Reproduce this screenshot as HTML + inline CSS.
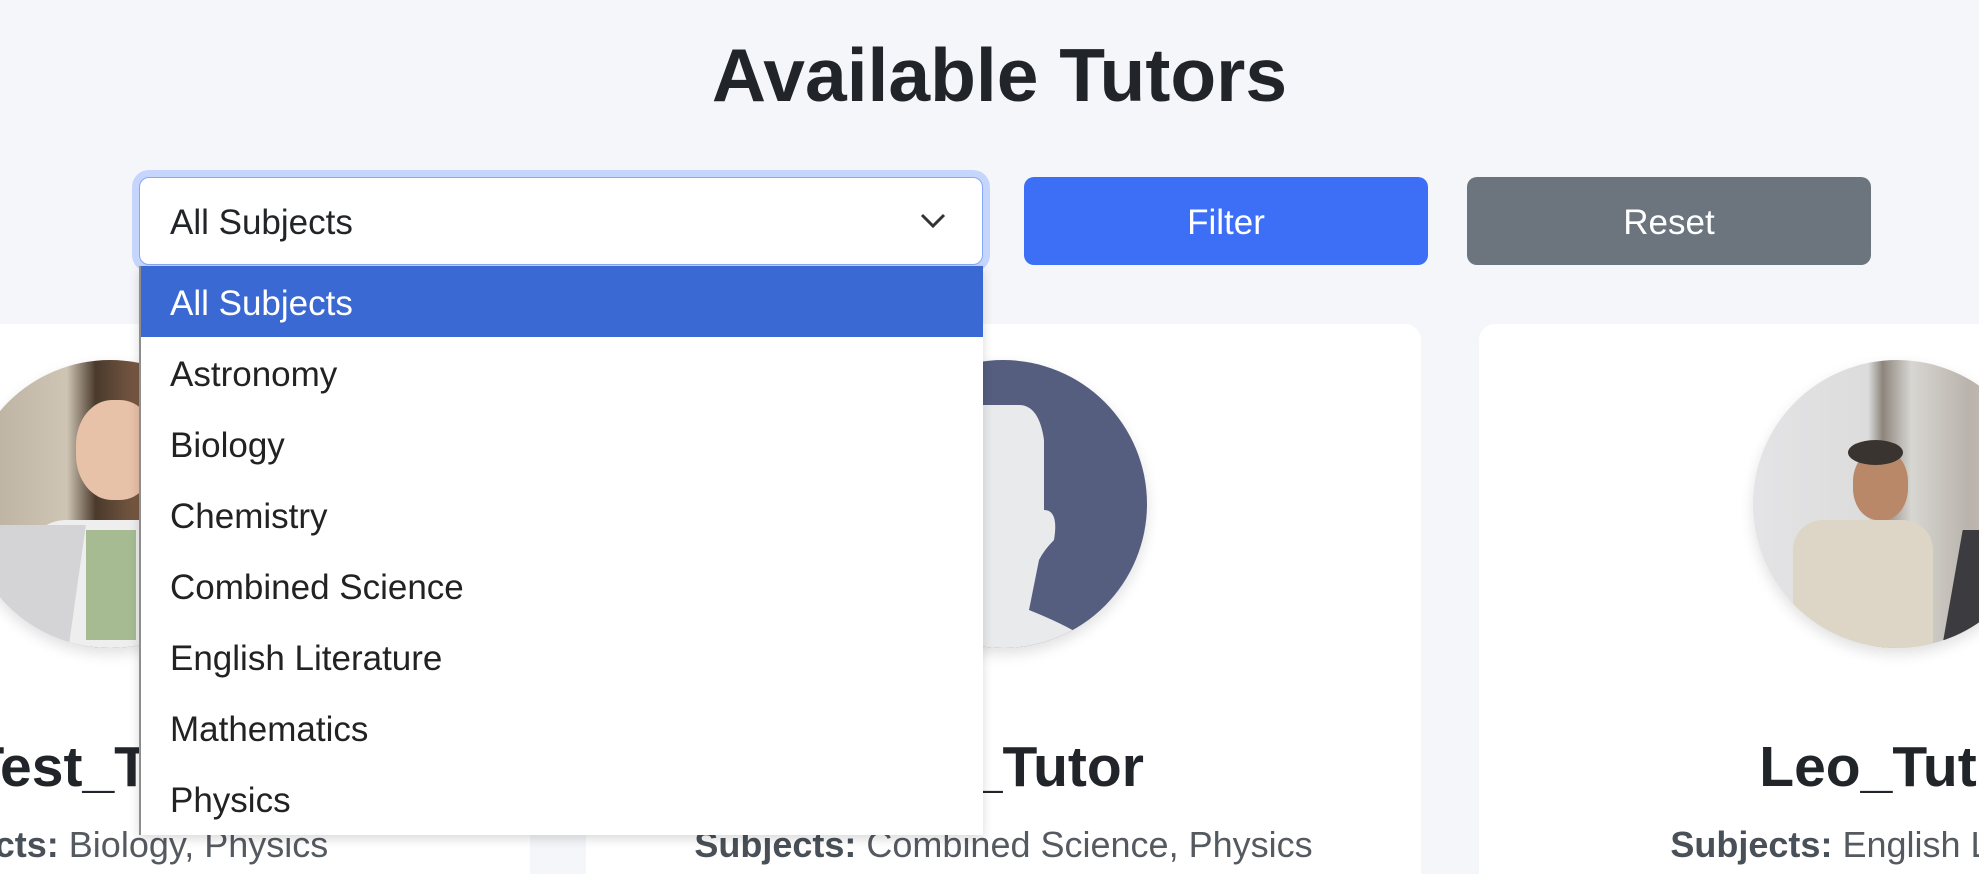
<!DOCTYPE html>
<html><head><meta charset="utf-8"><style>
*{margin:0;padding:0;box-sizing:border-box}
html,body{width:1979px;height:874px;overflow:hidden}
body{background:#f5f6fa;font-family:"Liberation Sans",sans-serif;color:#212529;position:relative}
.abs{position:absolute}
h1{position:absolute;left:0;width:1999px;top:32px;text-align:center;font-size:75px;font-weight:bold}
.sel{left:139px;top:177px;width:844px;height:88px;background:#fff;border:1px solid #86a8f8;border-radius:10px;box-shadow:0 0 0 7px #c5d5fb;font-size:35px;line-height:90px;padding-left:30px}
.btn{top:177px;width:404px;height:88px;border-radius:10px;color:#fff;font-size:35px;line-height:92px;text-align:center}
.card{top:324px;width:835px;height:550px;background:#fff;border-radius:16px 16px 0 0}
.av{width:288px;height:288px;border-radius:50%;overflow:hidden;top:36px;box-shadow:0 6px 14px rgba(0,0,0,.12)}
.name{top:410px;width:835px;text-align:center;font-size:57px;font-weight:bold;left:0}
.sub{top:500px;width:835px;text-align:center;font-size:36px;color:#555a60;left:0}
.sub b{color:#495057}
.dd{left:139px;top:266px;width:844px;height:569px;background:#fff;border-left:2px solid #8e8e8e;box-shadow:0 4px 10px rgba(0,0,0,.15)}
.it{height:71px;line-height:76px;padding-left:29px;font-size:35px;color:#222}
.it.on{background:#3b69d4;color:#fff}
</style></head><body>
<h1>Available Tutors</h1>
<div class="abs sel">All Subjects
<svg class="abs" style="right:36px;top:34px" width="26" height="18" viewBox="0 0 26 18"><path d="M2 3 L13 14 L24 3" fill="none" stroke="#333" stroke-width="3"/></svg></div>
<div class="abs btn" style="left:1024px;background:#3d6ef6">Filter</div>
<div class="abs btn" style="left:1467px;background:#6c757d">Reset</div>

<div class="abs card" style="left:-305px">
 <div class="abs av" style="left:271px;background:linear-gradient(90deg,#b8ad9c 0,#cfc5b5 35%,#4a3a2c 45%,#7a5a44 60%,#5a4536 80%,#3e3b39 100%)">
  <div class="abs" style="left:110px;top:40px;width:80px;height:100px;border-radius:45%;background:#e8c2a8"></div>
  <div class="abs" style="left:60px;top:160px;width:180px;height:140px;background:#eeeeee;border-radius:40px 40px 0 0"></div>
  <div class="abs" style="left:120px;top:170px;width:50px;height:110px;background:#a7bb92"></div>
  <div class="abs" style="left:0;top:165px;width:110px;height:140px;background:#d4d4d6;transform:skewX(-8deg)"></div>
 </div>
 <div class="abs name">Test_Tutor</div>
 <div class="abs sub"><b>Subjects:</b> Biology, Physics</div>
</div>

<div class="abs card" style="left:586px">
 <div class="abs av" style="left:273px;background:#565e80">
  <svg width="288" height="288" viewBox="0 0 288 288"><path d="M60 60 Q60 45 80 45 L160 45 Q180 45 185 80 L185 150 Q200 150 195 180 Q185 190 180 200 L170 250 Q220 270 240 288 L0 288 L0 60 Z" fill="#e8eaec"/></svg>
 </div>
 <div class="abs name">Ben_Tutor</div>
 <div class="abs sub"><b>Subjects:</b> Combined Science, Physics</div>
</div>

<div class="abs card" style="left:1479px">
 <div class="abs av" style="left:274px;background:linear-gradient(90deg,#e4e4e6 0,#dcdcdc 40%,#8d857c 45%,#d8d6d2 55%,#b9b3ab 75%,#cfcac4 100%)">
  <div class="abs" style="left:100px;top:90px;width:55px;height:70px;border-radius:45%;background:#b88868"></div>
  <div class="abs" style="left:95px;top:80px;width:55px;height:25px;border-radius:50%;background:#3a3430"></div>
  <div class="abs" style="left:40px;top:160px;width:140px;height:140px;background:#ddd5c6;border-radius:30px 30px 0 0"></div>
  <div class="abs" style="left:200px;top:170px;width:60px;height:110px;background:#3c3c40;transform:skewX(-10deg)"></div>
 </div>
 <div class="abs name">Leo_Tutor</div>
 <div class="abs sub"><b>Subjects:</b> English Literature</div>
</div>

<div class="abs dd">
 <div class="it on">All Subjects</div>
 <div class="it">Astronomy</div>
 <div class="it">Biology</div>
 <div class="it">Chemistry</div>
 <div class="it">Combined Science</div>
 <div class="it">English Literature</div>
 <div class="it">Mathematics</div>
 <div class="it">Physics</div>
</div>
</body></html>
